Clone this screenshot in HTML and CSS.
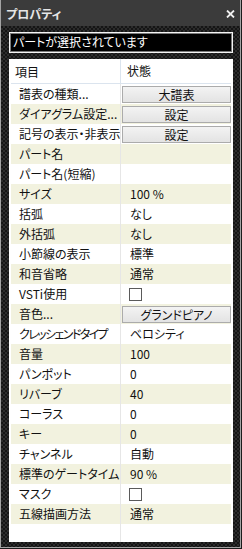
FILE: index.html
```html
<!DOCTYPE html>
<html lang="ja">
<head>
    <meta charset="UTF-8">
    <meta name="viewport" content="width=device-width, initial-scale=1.0">
    <title>プロパティ</title>
    <link rel="stylesheet" href="styles.css">
</head>
<body>

    <div class="window">
        <div class="titlebar">
            <span class="title">プロパティ</span>
            <svg class="close" width="9" height="8" viewBox="0 0 9 8">
                <path d="M1 0.5 L8 7.5 M8 0.5 L1 7.5" stroke="#f0f0f0" stroke-width="1.8" fill="none"/>
            </svg>
        </div>

        <div class="content">
            <div class="selection">パートが選択されています</div>

            <div class="panel">
                <div class="row head">
                    <div class="label">項目</div>
                    <div class="value">状態</div>
                </div>

                <div class="row">
                    <div class="label">譜表の種類...</div>
                    <div class="value"><button class="btn">大譜表</button></div>
                </div>
                <div class="row alt">
                    <div class="label">ダイアグラム設定...</div>
                    <div class="value"><button class="btn">設定</button></div>
                </div>
                <div class="row">
                    <div class="label">記号の表示・非表示...</div>
                    <div class="value"><button class="btn">設定</button></div>
                </div>
                <div class="row alt">
                    <div class="label">パート名</div>
                    <div class="value"></div>
                </div>
                <div class="row">
                    <div class="label">パート名(短縮)</div>
                    <div class="value"></div>
                </div>
                <div class="row alt">
                    <div class="label">サイズ</div>
                    <div class="value">100 %</div>
                </div>
                <div class="row">
                    <div class="label">括弧</div>
                    <div class="value">なし</div>
                </div>
                <div class="row alt">
                    <div class="label">外括弧</div>
                    <div class="value">なし</div>
                </div>
                <div class="row">
                    <div class="label">小節線の表示</div>
                    <div class="value">標準</div>
                </div>
                <div class="row alt">
                    <div class="label">和音省略</div>
                    <div class="value">通常</div>
                </div>
                <div class="row">
                    <div class="label">VSTi使用</div>
                    <div class="value"><span class="check"></span></div>
                </div>
                <div class="row alt">
                    <div class="label">音色...</div>
                    <div class="value"><button class="btn">グランドピアノ</button></div>
                </div>
                <div class="row">
                    <div class="label narrow">クレッシェンドタイプ</div>
                    <div class="value">ベロシティ</div>
                </div>
                <div class="row alt">
                    <div class="label">音量</div>
                    <div class="value">100</div>
                </div>
                <div class="row">
                    <div class="label">パンポット</div>
                    <div class="value">0</div>
                </div>
                <div class="row alt">
                    <div class="label">リバーブ</div>
                    <div class="value">40</div>
                </div>
                <div class="row">
                    <div class="label">コーラス</div>
                    <div class="value">0</div>
                </div>
                <div class="row alt">
                    <div class="label">キー</div>
                    <div class="value">0</div>
                </div>
                <div class="row">
                    <div class="label">チャンネル</div>
                    <div class="value">自動</div>
                </div>
                <div class="row alt">
                    <div class="label">標準のゲートタイム</div>
                    <div class="value">90 %</div>
                </div>
                <div class="row">
                    <div class="label">マスク</div>
                    <div class="value"><span class="check"></span></div>
                </div>
                <div class="row alt">
                    <div class="label">五線描画方法</div>
                    <div class="value">通常</div>
                </div>

                <div class="row filler">
                    <div class="label"></div>
                    <div class="value"></div>
                </div>
            </div>
        </div>
    </div>

</body>
</html>
```

FILE: styles.css
```css
body {
    margin: 0;
    background-color: #1c1c1c;
    font-family: "Noto Sans CJK JP", "Noto Sans", sans-serif;
    font-size: 12px;
    font-feature-settings: "palt";
}

.window {
    width: 241px;
    height: 548px;
    box-sizing: border-box;
    border: 1px solid #a4a4a4;
    border-top: none;
    display: flex;
    flex-direction: column;
    background-color: #1f1f1f;
    background-image: repeating-conic-gradient(#151515 0 25%, #2c2c2c 0 50%);
    background-size: 4px 4px;
}

.titlebar {
    height: 26px;
    flex-shrink: 0;
    display: flex;
    align-items: center;
    justify-content: space-between;
    padding: 1px 5px 0 5px;
    box-sizing: border-box;
    background: #3b3b3b;
}

.title {
    color: #e6e6e6;
    font-weight: bold;
    font-size: 12px;
}

.close {
    display: block;
    margin-top: 1px;
}

.content {
    flex: 1;
    display: flex;
    flex-direction: column;
    padding: 6px 7px 5px 8px;
    min-height: 0;
}

.selection {
    height: 21px;
    box-sizing: border-box;
    border: 1px solid #f4f4f4;
    box-shadow: inset 0 0 0 1px #7a7a7a;
    background: #000;
    color: #fff;
    padding: 0 3px;
    line-height: 18px;
    white-space: nowrap;
    overflow: hidden;
}

.panel {
    flex: 1;
    margin-top: 6px;
    padding: 0 2px;
    background: #fff;
    display: flex;
    flex-direction: column;
}

.row {
    display: grid;
    grid-template-columns: 110px 110px;
    height: 20px;
    line-height: 20px;
    color: #111;
}

.row.alt {
    background: #f2f2df;
}

.label {
    padding-left: 8px;
    border-right: 1px solid #e6e6e6;
    white-space: nowrap;
    overflow: hidden;
}

.label.narrow {
    letter-spacing: -1.6px;
}

.value {
    padding-left: 9px;
    display: flex;
    align-items: center;
    white-space: nowrap;
    overflow: hidden;
}

.row.head {
    height: 25px;
    line-height: 26px;
    border-bottom: 1px solid #dbe4ee;
    box-sizing: border-box;
}

.row.head .label {
    padding-left: 4px;
    border-right-color: #dbe4ee;
}

.row.head .value {
    padding-left: 6px;
}

.row.filler {
    flex: 1;
}

.btn {
    width: 109px;
    height: 17px;
    margin: 2px 0 1px -8px;
    padding: 0;
    border: 1px solid #ababab;
    background: linear-gradient(#f3f3f3, #e3e3e3);
    font-family: inherit;
    font-size: 12px;
    font-feature-settings: "palt";
    line-height: 15px;
    color: #111;
    text-align: center;
}

.check {
    width: 13px;
    height: 13px;
    box-sizing: border-box;
    border: 1px solid #5a5a5a;
    background: #fff;
    margin-left: -1px;
}
```
